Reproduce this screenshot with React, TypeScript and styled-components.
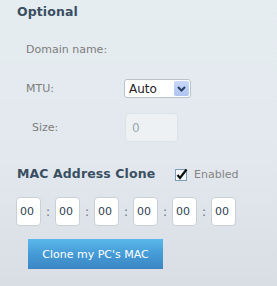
import React from "react";
import styled, { createGlobalStyle } from "styled-components";

const GlobalStyle = createGlobalStyle`
  html, body {
    margin: 0;
    padding: 0;
  }
  body {
    font-family: "DejaVu Sans", Verdana, sans-serif;
  }
`;

const Page = styled.div`
  width: 277px;
  height: 286px;
  box-sizing: border-box;
  padding: 4px 0 0 17px;
  background: linear-gradient(to bottom, #e6edf1 0%, #e2e8ed 55%, #d8dee4 100%);
  overflow: hidden;
`;

const SectionTitle = styled.div`
  font-size: 12.5px;
  font-weight: bold;
  color: #3b4f62;
  line-height: 16px;
  letter-spacing: 0.1px;
`;

const Form = styled.div`
  display: flex;
  flex-direction: column;
  margin-top: 10px;
`;

const Row = styled.div`
  display: flex;
  align-items: center;
  height: 39px;
`;

const Label = styled.div<{ $indent?: number }>`
  width: 107px;
  box-sizing: border-box;
  padding-left: ${(p) => p.$indent ?? 9}px;
  font-size: 11px;
  color: #7d7d7d;
`;

const SelectBox = styled.div`
  display: flex;
  align-items: center;
  justify-content: space-between;
  width: 67px;
  height: 19px;
  box-sizing: border-box;
  padding: 1px 1px 1px 4px;
  background: #fff;
  border: 1px solid #b9c3cb;
  border-radius: 3px;
  font-size: 12px;
  color: #222;
`;

const ArrowButton = styled.div`
  display: flex;
  align-items: center;
  justify-content: center;
  width: 15px;
  height: 15px;
  background: linear-gradient(to bottom, #c8d8f8, #aec4f0);
  border-radius: 2px;
`;

const DisabledInput = styled.div`
  width: 53px;
  height: 29px;
  box-sizing: border-box;
  padding-left: 6px;
  display: flex;
  align-items: center;
  background: #edf1f3;
  border: 1px solid #dce3e8;
  border-radius: 4px;
  font-size: 12px;
  color: #9aa7b1;
  margin-left: 1px;
`;

const MacHeader = styled.div`
  display: flex;
  align-items: center;
  margin-top: 19px;
  height: 16px;
`;

const MacTitle = styled(SectionTitle)`
  width: 158px;
`;

const CheckWrap = styled.label`
  display: flex;
  align-items: center;
  gap: 5px;
  font-size: 11px;
  color: #858585;
`;

const MacRow = styled.div`
  display: flex;
  align-items: center;
  margin-top: 15px;
  margin-left: -1px;
`;

const MacField = styled.div`
  width: 25px;
  height: 29px;
  box-sizing: border-box;
  padding-left: 3px;
  display: flex;
  align-items: center;
  background: #fff;
  border: 1px solid #c9d1d7;
  border-radius: 4px;
  font-size: 11px;
  color: #2f4354;
`;

const Colon = styled.span`
  width: 14px;
  text-align: center;
  font-size: 12px;
  color: #66707a;
`;

const CloneButton = styled.button`
  margin: 13px 0 0 11px;
  width: 135px;
  height: 30px;
  border: none;
  padding: 0;
  background: linear-gradient(to bottom, #5cb8ea 0%, #459bd6 50%, #3a86c2 100%);
  color: #fff;
  font-family: "DejaVu Sans", Verdana, sans-serif;
  font-size: 11px;
  cursor: pointer;
`;

function Chevron() {
  return (
    <svg width="9" height="6" viewBox="0 0 9 6">
      <path d="M1 1 L4.5 4.5 L8 1" fill="none" stroke="#2c3e64" strokeWidth="2" />
    </svg>
  );
}

function Checkbox() {
  return (
    <svg width="14" height="13" viewBox="0 0 14 13">
      <rect x="0.5" y="1.5" width="11" height="11" fill="#f4f7fb" stroke="#7f9db9" />
      <path d="M2.5 7 L5 10 L11.5 1.5" fill="none" stroke="#111" strokeWidth="2.2" />
    </svg>
  );
}

export default function App() {
  const mac = ["00", "00", "00", "00", "00", "00"];
  return (
    <>
      <GlobalStyle />
      <Page>
        <SectionTitle>Optional</SectionTitle>
        <Form>
          <Row>
            <Label>Domain name:</Label>
          </Row>
          <Row>
            <Label>MTU:</Label>
            <SelectBox>
              <span>Auto</span>
              <ArrowButton>
                <Chevron />
              </ArrowButton>
            </SelectBox>
          </Row>
          <Row>
            <Label $indent={15}>Size:</Label>
            <DisabledInput>0</DisabledInput>
          </Row>
        </Form>
        <MacHeader>
          <MacTitle>MAC Address Clone</MacTitle>
          <CheckWrap>
            <Checkbox />
            Enabled
          </CheckWrap>
        </MacHeader>
        <MacRow>
          {mac.map((v, i) => (
            <React.Fragment key={i}>
              {i > 0 && <Colon>:</Colon>}
              <MacField>{v}</MacField>
            </React.Fragment>
          ))}
        </MacRow>
        <CloneButton>Clone my PC's MAC</CloneButton>
      </Page>
    </>
  );
}
